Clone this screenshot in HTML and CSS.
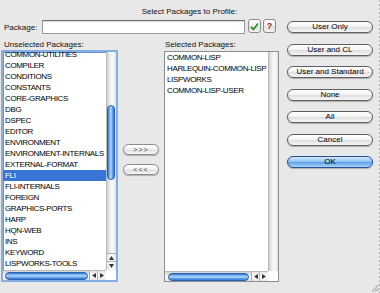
FILE: index.html
```html
<!DOCTYPE html>
<html lang="en">
<head>
    <meta charset="UTF-8">
    <meta name="viewport" content="width=device-width, initial-scale=1.0">
    <title>Select Packages to Profile</title>
    <link rel="stylesheet" href="styles.css">
</head>
<body>
    <div class="window">
        <div class="dialog">
            <h1 class="title">Select Packages to Profile:</h1>
            <div class="content">
                <div class="left-area">
                    <div class="package-row">
                        <label for="package">Package:</label>
                        <input type="text" id="package">
                        <button class="mini-btn check" title="OK">
                            <svg width="9" height="9" viewBox="0 0 9 9"><path d="M1 4.8 L3.4 7.4 L8 1.4" fill="none" stroke="#23911f" stroke-width="1.7"/></svg>
                        </button>
                        <button class="mini-btn help">?</button>
                    </div>
                    <div class="lists">
                        <div class="list-label unselected-label">Unselected Packages:</div>
                        <div class="list-label selected-label">Selected Packages:</div>

                        <div class="listbox focused">
                            <ul class="items scrolled">
                                <li>COMMON-UTILITIES</li>
                                <li>COMPILER</li>
                                <li>CONDITIONS</li>
                                <li>CONSTANTS</li>
                                <li>CORE-GRAPHICS</li>
                                <li>DBG</li>
                                <li>DSPEC</li>
                                <li>EDITOR</li>
                                <li>ENVIRONMENT</li>
                                <li>ENVIRONMENT-INTERNALS</li>
                                <li>EXTERNAL-FORMAT</li>
                                <li class="selected">FLI</li>
                                <li>FLI-INTERNALS</li>
                                <li>FOREIGN</li>
                                <li>GRAPHICS-PORTS</li>
                                <li>HARP</li>
                                <li>HQN-WEB</li>
                                <li>INS</li>
                                <li>KEYWORD</li>
                                <li>LISPWORKS-TOOLS</li>
                                <li>LOOP</li>
                            </ul>
                            <div class="vscroll">
                                <div class="vthumb"></div>
                                <div class="varrows">
                                    <div class="arrow"><svg width="5" height="4" viewBox="0 0 5 4"><path d="M2.5 0 L5 4 L0 4 Z" fill="#333"/></svg></div>
                                    <div class="arrow"><svg width="5" height="4" viewBox="0 0 5 4"><path d="M0 0 L5 0 L2.5 4 Z" fill="#333"/></svg></div>
                                </div>
                            </div>
                            <div class="hscroll">
                                <div class="hthumb left-thumb"></div>
                                <div class="harrows">
                                    <div class="arrow"><svg width="4" height="5" viewBox="0 0 4 5"><path d="M0 2.5 L4 0 L4 5 Z" fill="#333"/></svg></div>
                                    <div class="arrow"><svg width="4" height="5" viewBox="0 0 4 5"><path d="M0 0 L4 2.5 L0 5 Z" fill="#333"/></svg></div>
                                </div>
                            </div>
                            <div class="corner"></div>
                        </div>

                        <div class="move-buttons">
                            <button class="pill move">&gt;&gt;&gt;</button>
                            <button class="pill move">&lt;&lt;&lt;</button>
                        </div>

                        <div class="listbox plain">
                            <ul class="items">
                                <li>COMMON-LISP</li>
                                <li>HARLEQUIN-COMMON-LISP</li>
                                <li>LISPWORKS</li>
                                <li>COMMON-LISP-USER</li>
                            </ul>
                            <div class="vscroll empty"></div>
                            <div class="hscroll">
                                <div class="hthumb right-thumb"></div>
                                <div class="harrows">
                                    <div class="arrow"><svg width="4" height="5" viewBox="0 0 4 5"><path d="M0 2.5 L4 0 L4 5 Z" fill="#333"/></svg></div>
                                    <div class="arrow"><svg width="4" height="5" viewBox="0 0 4 5"><path d="M0 0 L4 2.5 L0 5 Z" fill="#333"/></svg></div>
                                </div>
                            </div>
                            <div class="corner"></div>
                        </div>
                    </div>
                </div>
                <div class="side-buttons">
                    <button class="pill">User Only</button>
                    <button class="pill">User and CL</button>
                    <button class="pill">User and Standard</button>
                    <button class="pill">None</button>
                    <button class="pill">All</button>
                    <button class="pill">Cancel</button>
                    <button class="pill default">OK</button>
                </div>
            </div>
        </div>
        <div class="edge"></div>
        <svg class="grip" width="8" height="8" viewBox="0 0 8 8">
            <path d="M7.5 1 L1 7.5 M7.5 4 L4 7.5 M7.5 6.5 L6.5 7.5" stroke="#8a8a8a" stroke-width="1"/>
        </svg>
    </div>
</body>
</html>
```

FILE: styles.css
```css
* {
    margin: 0;
    padding: 0;
    box-sizing: border-box;
    font-family: 'Liberation Sans', Arial, sans-serif;
}

body {
    background: #e8e8e8;
    width: 380px;
    height: 293px;
    overflow: hidden;
}

.window {
    position: relative;
    display: flex;
    width: 380px;
    height: 293px;
    background: #e8e8e8;
}

.dialog {
    width: 379px;
}

.edge {
    width: 1px;
    background: repeating-linear-gradient(to bottom, #e7a9d9 0 2px, #e8e8e8 2px 4px, #9aa8ea 4px 6px, #e8e8e8 6px 8px);
}

.title {
    height: 20px;
    padding-top: 7px;
    font-size: 8px;
    line-height: 10px;
    font-weight: normal;
    text-align: center;
    color: #111;
}

.content {
    display: flex;
    padding-left: 1px;
}

.left-area {
    width: 278px;
}

.package-row {
    display: flex;
    align-items: center;
    height: 14px;
}

.package-row label {
    width: 38px;
    margin-left: 3px;
    font-size: 8px;
    color: #111;
}

.package-row input {
    width: 203px;
    height: 14px;
    border: 1px solid #9a9a9a;
    border-top-color: #6f6f6f;
    background: #fff;
    box-shadow: inset 0 1px 1px rgba(0, 0, 0, 0.15);
    outline: none;
}

.mini-btn {
    width: 13px;
    height: 14px;
    margin-top: -2px;
    border: 1px solid #8c8c8c;
    border-radius: 3px;
    background: linear-gradient(#ffffff, #f1f1f1 50%, #dedede 55%, #f3f3f3);
    display: flex;
    align-items: center;
    justify-content: center;
}

.check {
    margin-left: 3px;
}

.help {
    margin-left: 2px;
    font-size: 9px;
    font-weight: bold;
    color: #b0181b;
}

.lists {
    display: grid;
    grid-template-columns: 117px 46px 115px;
    grid-template-rows: 10px 232px;
    margin-top: 6px;
}

.list-label {
    font-size: 8px;
    line-height: 10px;
    color: #111;
    white-space: nowrap;
}

.unselected-label {
    grid-column: 1;
    padding-left: 3px;
}

.selected-label {
    grid-column: 3;
    padding-left: 1px;
}

.listbox {
    display: grid;
    grid-template-columns: 1fr 10px;
    grid-template-rows: 1fr 10px;
    background: #fff;
    overflow: hidden;
}

.listbox.focused {
    grid-column: 1;
    grid-row: 2;
    border: 2px solid #86aee3;
    box-shadow: inset 0 0 0 1px #6b95d3;
}

.listbox.plain {
    grid-column: 3;
    grid-row: 2;
    margin-top: 1px;
    border: 1px solid #8e8e8e;
}

.items {
    list-style: none;
    overflow: hidden;
}

.items li {
    height: 11px;
    line-height: 11px;
    padding-left: 2px;
    font-size: 8px;
    letter-spacing: -0.35px;
    white-space: nowrap;
    color: #000;
}

.items.scrolled {
    margin-top: -3.5px;
}

.items li.selected {
    background: #3875d7;
    color: #fff;
}

.vscroll {
    display: flex;
    flex-direction: column;
    padding-top: 53px;
    border-left: 1px solid #b9b9b9;
    background: linear-gradient(90deg, #cfcfcf, #ececec 30%, #fbfbfb 60%, #e3e3e3);
}

.vscroll.empty {
    padding-top: 0;
}

.vthumb {
    height: 75px;
    margin: 0 1px 0 0;
    border: 1px solid #2c5fae;
    border-radius: 5px;
    background: linear-gradient(90deg, #3272cf, #86bdf4 30%, #b3d8fc 50%, #5d9fe9 75%, #3a7fd9);
}

.varrows {
    margin-top: auto;
    border-top: 1px solid #a9a9a9;
}

.varrows .arrow {
    height: 8px;
    display: flex;
    align-items: center;
    justify-content: center;
    background: linear-gradient(90deg, #e6e6e6, #fdfdfd 50%, #e8e8e8);
    border-bottom: 1px solid #b4b4b4;
}

.varrows .arrow:last-child {
    border-bottom: none;
}

.hscroll {
    display: flex;
    align-items: center;
    border-top: 1px solid #b9b9b9;
    background: linear-gradient(#d3d3d3, #f2f2f2 40%, #fafafa 60%, #e6e6e6);
}

.hthumb {
    height: 8px;
    border: 1px solid #2c5fae;
    border-radius: 5px;
    background: linear-gradient(#3272cf, #86bdf4 30%, #b3d8fc 50%, #5d9fe9 75%, #3a7fd9);
}

.left-thumb {
    width: 83px;
    margin-left: 2px;
}

.right-thumb {
    width: 81px;
    margin-left: 3px;
}

.harrows {
    display: flex;
    margin-left: auto;
    height: 100%;
    border-left: 1px solid #a9a9a9;
}

.harrows .arrow {
    width: 8px;
    display: flex;
    align-items: center;
    justify-content: center;
    background: linear-gradient(#e6e6e6, #fdfdfd 50%, #e8e8e8);
    border-right: 1px solid #b4b4b4;
}

.harrows .arrow:last-child {
    border-right: none;
}

.corner {
    background: #fff;
}

.move-buttons {
    grid-column: 2;
    grid-row: 2;
    display: flex;
    flex-direction: column;
    align-items: center;
    gap: 9px;
    padding-top: 94px;
}

.pill {
    display: block;
    height: 12px;
    border: 1px solid #5f5f5f;
    border-radius: 6px;
    background: linear-gradient(#ffffff, #f4f4f4 45%, #e0e0e0 55%, #f6f6f6);
    box-shadow: 0 1px 1px rgba(0, 0, 0, 0.25);
    font-size: 8px;
    line-height: 10px;
    color: #000;
    text-align: center;
}

.pill.move {
    width: 36px;
    height: 11px;
    font-size: 7px;
    line-height: 9px;
    letter-spacing: 1px;
    color: #444;
    border-color: #8a8a8a;
}

.side-buttons {
    width: 86px;
    margin-left: 8px;
    padding-top: 1px;
    display: flex;
    flex-direction: column;
    gap: 10.5px;
}

.pill.default {
    border-color: #27508f;
    background: linear-gradient(#d4e7fc, #93c3f4 45%, #5fa3ea 55%, #a9d5fb);
}

.grip {
    position: absolute;
    right: 1px;
    bottom: 1px;
}
```
